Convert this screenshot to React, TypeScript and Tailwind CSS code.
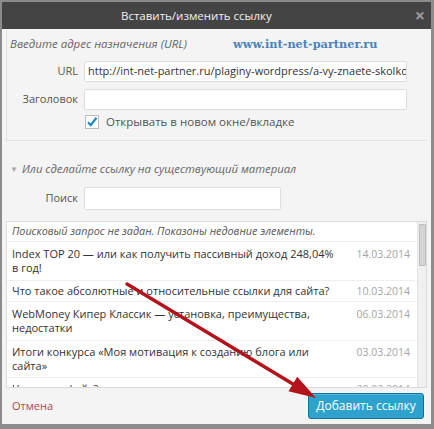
import React from 'react';

const rows = [
    { lines: ['Index TOP 20 — или как получить пассивный доход 248,04%', 'в год!'], date: '14.03.2014', py: 'py-[5px]' },
    { lines: ['Что такое абсолютные и относительные ссылки для сайта?'], date: '10.03.2014', py: 'py-[3px]' },
    { lines: ['WebMoney Кипер Классик — установка, преимущества,', 'недостатки'], date: '06.03.2014', py: 'py-[5px]' },
    { lines: ['Итоги конкурса «Моя мотивация к созданию блога или', 'сайта»'], date: '03.03.2014', py: 'py-[4px]' },
    { lines: ['Что такое фейк?'], date: '28.02.2014', py: 'py-[4px]' },
];

function Arrow() {
    // red annotation arrow drawn over the dialog
    const tip = { x: 316, y: 398 };
    const start = { x: 127, y: 284 };
    const dx = tip.x - start.x;
    const dy = tip.y - start.y;
    const len = Math.hypot(dx, dy);
    const ux = dx / len;
    const uy = dy / len;
    const bx = tip.x - ux * 27;
    const by = tip.y - uy * 27;
    const px = -uy * 8.5;
    const py = ux * 8.5;
    return (
        <svg className="absolute left-0 top-0 pointer-events-none" width={434} height={429}>
            <line x1={start.x} y1={start.y} x2={bx + ux * 2} y2={by + uy * 2} stroke="#b3141c" strokeWidth={3.5} strokeLinecap="round" />
            <polygon points={`${tip.x},${tip.y} ${bx + px},${by + py} ${bx - px},${by - py}`} fill="#b3141c" />
        </svg>
    );
}

export default function App() {
    return (
        <div
            className="relative w-[434px] h-[429px] bg-[#8c8c8c] pt-[2px] pl-[2px] pr-[3px] pb-[5px] flex flex-col text-[#333]"
            style={{ fontFamily: '"Open Sans", "Liberation Sans", sans-serif' }}
        >
            {/* Title bar */}
            <div className="h-[27px] bg-[#444] flex items-center pl-[119px] relative shrink-0">
                <span className="text-[11.5px] text-[#f1f1f1]">Вставить/изменить ссылку</span>
                <span className="absolute right-[6px] top-[3px] text-[18px] leading-[20px] font-bold text-[#9a9a9a]">×</span>
            </div>

            <div className="flex-1 bg-[#f4f4f4] flex flex-col">
                {/* Link options */}
                <div className="mx-[4px] h-[112px] border-b border-l border-[#e2e2e2] flex flex-col shrink-0">
                    <div className="mt-[7px] h-[16px] flex items-center pl-[3px]">
                        <span className="italic text-[11.5px] text-[#666] w-[223px]">Введите адрес назначения (URL)</span>
                        <span
                            className="text-[11.3px] font-bold text-[#4a82bb]"
                            style={{ fontFamily: '"DejaVu Serif", serif' }}
                        >
                            www.int-net-partner.ru
                        </span>
                    </div>
                    <div className="mt-[9px] h-[21px] flex items-center">
                        <span className="w-[72px] text-right text-[11px] text-[#555] pr-[1px]">URL</span>
                        <div className="ml-[5px] w-[323px] h-[21px] bg-white border border-[#ddd] rounded-[2px] flex items-center px-[3px] overflow-hidden">
                            <span className="text-[11px] whitespace-nowrap text-[#333]">
                                http://int-net-partner.ru/plaginy-wordpress/a-vy-znaete-skolko-v
                            </span>
                        </div>
                    </div>
                    <div className="mt-[7px] h-[21px] flex items-center">
                        <span className="w-[72px] text-right text-[11px] text-[#555] pr-[1px]">Заголовок</span>
                        <div className="ml-[5px] w-[323px] h-[21px] bg-white border border-[#ddd] rounded-[2px]" />
                    </div>
                    <div className="mt-[5px] h-[14px] flex items-center pl-[78px]">
                        <div className="w-[14px] h-[14px] bg-white border border-[#bbb] flex items-center justify-center">
                            <svg width="12" height="12" viewBox="0 0 12 12">
                                <path d="M2 6.2 L4.8 9 L10.5 1.8" fill="none" stroke="#1e8cbe" strokeWidth="2.2" />
                            </svg>
                        </div>
                        <span className="ml-[7px] text-[11.5px] text-[#555]">Открывать в новом окне/вкладке</span>
                    </div>
                </div>

                {/* Search panel */}
                <div className="mt-[20px] h-[16px] flex items-center pl-[8px] shrink-0">
                    <span className="text-[8px] text-[#aaa] mr-[4px]">▼</span>
                    <span className="italic text-[11.3px] text-[#666]">Или сделайте ссылку на существующий материал</span>
                </div>
                <div className="mt-[10px] h-[23px] flex items-center shrink-0">
                    <span className="w-[76px] text-right text-[11px] text-[#555]">Поиск</span>
                    <div className="ml-[6px] w-[197px] h-[23px] bg-white border border-[#ddd] rounded-[2px]" />
                </div>

                <div className="mt-[11px] mx-[4px] h-[167px] bg-white border border-[#dcdcdc] relative overflow-hidden shrink-0">
                    <div className="mr-[9px]">
                        <div className="h-[20px] pl-[5px] flex items-center border-b border-[#eee]">
                            <span className="italic text-[10.8px] text-[#555]">Поисковый запрос не задан. Показоны недовние элементы.</span>
                        </div>
                        {rows.map((r, i) => (
                            <div key={i} className={`flex justify-between pl-[5px] pr-[7px] border-b border-[#eee] ${r.py}`}>
                                <div className="text-[11px] leading-[14px] text-[#333]">
                                    {r.lines.map((l, j) => (
                                        <div key={j} className="whitespace-nowrap">{l}</div>
                                    ))}
                                </div>
                                <span className="text-[10.5px] leading-[14px] text-[#a5a5a5]">{r.date}</span>
                            </div>
                        ))}
                    </div>
                    {/* scrollbar */}
                    <div className="absolute right-0 top-0 bottom-0 w-[9px] bg-[#f0f0f0] border-l border-[#e4e4e4]">
                        <div className="mt-[2px] mx-auto w-[7px] h-[42px] bg-[#d4d4d4] border border-[#bdbdbd] rounded-[1px]" />
                    </div>
                </div>

                {/* Footer */}
                <div className="flex-1 flex items-center justify-between pl-[10px] pr-[7px]">
                    <span className="text-[11px] text-[#b04848]">Отмена</span>
                    <div className="w-[116px] h-[26px] bg-[#2ea2cc] border border-[#0074a2] rounded-[3px] flex items-center justify-center shadow-[inset_0_1px_0_rgba(120,200,230,0.5)]">
                        <span className="text-[12px] text-white">Добавить ссылку</span>
                    </div>
                </div>
            </div>

            <Arrow />
        </div>
    );
}
